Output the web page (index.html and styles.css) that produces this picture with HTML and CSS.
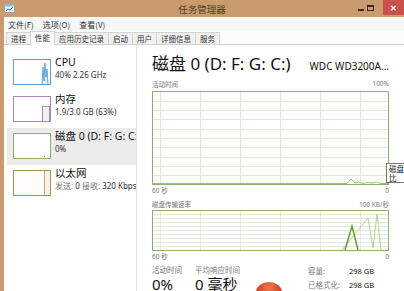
FILE: index.html
```html
<!DOCTYPE html>
<html lang="zh-CN">
<head>
    <meta charset="UTF-8">
    <meta name="viewport" content="width=device-width, initial-scale=1.0">
    <title>任务管理器</title>
    <link rel="stylesheet" href="styles.css">
</head>
<body>
    <div class="window">
        <div class="titlebar">
            <div class="app-icon">
                <svg width="11" height="9" viewBox="0 0 11 9">
                    <rect x="0.5" y="0.5" width="10" height="8" fill="#e9f1f7" stroke="#8fa7bb"/>
                    <rect x="0.5" y="0.5" width="10" height="2" fill="#9cc0dc"/>
                    <polyline points="2,7 4,5 6,6 9,3" fill="none" stroke="#3f86c4" stroke-width="1"/>
                </svg>
            </div>
            <div class="title">任务管理器</div>
            <div class="controls">
                <span class="ctl-min"></span>
                <span class="ctl-max"></span>
                <span class="ctl-close">✕</span>
            </div>
        </div>

        <div class="frame">
            <div class="menubar">
                <span>文件(F)</span>
                <span>选项(O)</span>
                <span>查看(V)</span>
            </div>
            <div class="tabs">
                <div class="tab">进程</div>
                <div class="tab active">性能</div>
                <div class="tab">应用历史记录</div>
                <div class="tab">启动</div>
                <div class="tab">用户</div>
                <div class="tab">详细信息</div>
                <div class="tab">服务</div>
            </div>

            <div class="main">
                <div class="sidebar">
                    <div class="item">
                        <svg class="thumb" width="38" height="26" viewBox="0 0 38 26">
                            <rect x="0.5" y="0.5" width="37" height="25" fill="#fff" stroke="#5b9fd0"/>
                            <polyline points="29,25 30,8 31,22 32,4 33,18 34,10 35,25" fill="#e3eff8" stroke="#4a93c8" stroke-width="0.8"/>
                        </svg>
                        <div class="info">
                            <div class="name">CPU</div>
                            <div class="sub">40% 2.26 GHz</div>
                        </div>
                    </div>
                    <div class="item">
                        <svg class="thumb" width="38" height="26" viewBox="0 0 38 26">
                            <rect x="0.5" y="0.5" width="37" height="25" fill="#fff" stroke="#a688ba"/>
                            <rect x="29.5" y="10.5" width="7" height="15" fill="#f4eff7" stroke="#a688ba"/>
                        </svg>
                        <div class="info">
                            <div class="name">内存</div>
                            <div class="sub">1.9/3.0 GB (63%)</div>
                        </div>
                    </div>
                    <div class="item selected">
                        <svg class="thumb" width="38" height="26" viewBox="0 0 38 26">
                            <rect x="0.5" y="0.5" width="37" height="25" fill="#fff" stroke="#8cb06a"/>
                            <rect x="31" y="23" width="1" height="1" fill="#6f9a48"/>
                        </svg>
                        <div class="info">
                            <div class="name">磁盘 0 (D: F: G: C:)</div>
                            <div class="sub">0%</div>
                        </div>
                    </div>
                    <div class="item">
                        <svg class="thumb" width="38" height="26" viewBox="0 0 38 26">
                            <rect x="0.5" y="0.5" width="37" height="25" fill="#fffdf9" stroke="#a88c5e"/>
                            <line x1="31.5" y1="1" x2="31.5" y2="25" stroke="#c4aa80"/>
                            <rect x="32" y="1" width="5" height="24" fill="#f7f1e6"/>
                        </svg>
                        <div class="info">
                            <div class="name">以太网</div>
                            <div class="sub"><span class="muted">发送:</span> 0 <span class="muted">接收:</span> 320 Kbps</div>
                        </div>
                    </div>
                </div>

                <div class="detail">
                    <div class="header">
                        <div class="disk-title">磁盘 0 (D: F: G: C:)</div>
                        <div class="model">WDC WD3200A...</div>
                    </div>

                    <div class="axis top">
                        <span>活动时间</span>
                        <span>100%</span>
                    </div>
                    <svg class="chart" width="237" height="94" viewBox="0 0 237 94">
                        <rect x="0.5" y="0.5" width="236" height="93" fill="#fff" stroke="#8fb070"/>
                        <g stroke="#dfe9d5" stroke-width="1">
                            <line x1="8.5" y1="1" x2="8.5" y2="93"/>
                            <line x1="48.5" y1="1" x2="48.5" y2="93"/>
                            <line x1="88.5" y1="1" x2="88.5" y2="93"/>
                            <line x1="128.5" y1="1" x2="128.5" y2="93"/>
                            <line x1="168.5" y1="1" x2="168.5" y2="93"/>
                            <line x1="208.5" y1="1" x2="208.5" y2="93"/>
                            <line x1="1" y1="10.5" x2="236" y2="10.5"/>
                            <line x1="1" y1="19.5" x2="236" y2="19.5"/>
                            <line x1="1" y1="28.5" x2="236" y2="28.5"/>
                            <line x1="1" y1="38.5" x2="236" y2="38.5"/>
                            <line x1="1" y1="47.5" x2="236" y2="47.5"/>
                            <line x1="1" y1="56.5" x2="236" y2="56.5"/>
                            <line x1="1" y1="66.5" x2="236" y2="66.5"/>
                            <line x1="1" y1="75.5" x2="236" y2="75.5"/>
                            <line x1="1" y1="84.5" x2="236" y2="84.5"/>
                        </g>
                        <polyline points="1,92.5 195,92.5 199,88 203,92 207,91 211,92.5 216,91.5 220,92 225,91 229,92.5 236,92.5" fill="none" stroke="#9cc07a" stroke-width="1"/>
                    </svg>
                    <div class="axis">
                        <span>60 秒</span>
                        <span>0</span>
                    </div>

                    <div class="axis top second">
                        <span>磁盘传输速率</span>
                        <span>100 KB/秒</span>
                    </div>
                    <svg class="chart" width="237" height="41" viewBox="0 0 237 41">
                        <rect x="0.5" y="0.5" width="236" height="40" fill="#fff" stroke="#8fb070"/>
                        <g stroke="#dfe9d5" stroke-width="1">
                            <line x1="8.5" y1="1" x2="8.5" y2="40"/>
                            <line x1="48.5" y1="1" x2="48.5" y2="40"/>
                            <line x1="88.5" y1="1" x2="88.5" y2="40"/>
                            <line x1="128.5" y1="1" x2="128.5" y2="40"/>
                            <line x1="168.5" y1="1" x2="168.5" y2="40"/>
                            <line x1="208.5" y1="1" x2="208.5" y2="40"/>
                            <line x1="1" y1="4.5" x2="236" y2="4.5"/>
                            <line x1="1" y1="8.5" x2="236" y2="8.5"/>
                            <line x1="1" y1="12.5" x2="236" y2="12.5"/>
                            <line x1="1" y1="16.5" x2="236" y2="16.5"/>
                            <line x1="1" y1="20.5" x2="236" y2="20.5"/>
                            <line x1="1" y1="24.5" x2="236" y2="24.5"/>
                            <line x1="1" y1="28.5" x2="236" y2="28.5"/>
                            <line x1="1" y1="32.5" x2="236" y2="32.5"/>
                            <line x1="1" y1="36.5" x2="236" y2="36.5"/>
                        </g>
                        <polyline points="190,40 216,8 221,38 225,4 229,40" fill="none" stroke="#b5d48f" stroke-width="1"/>
                        <polyline points="193,40 200,16 206,40" fill="none" stroke="#5f9e34" stroke-width="1.5"/>
                    </svg>
                    <div class="axis">
                        <span>60 秒</span>
                        <span>0</span>
                    </div>

                    <div class="stats">
                        <div class="stat">
                            <div class="stat-label">活动时间</div>
                            <div class="stat-value">0%</div>
                        </div>
                        <div class="stat">
                            <div class="stat-label">平均响应时间</div>
                            <div class="stat-value">0 毫秒</div>
                        </div>
                        <div class="props">
                            <span class="prop-key">容量:</span><span class="prop-val">298 GB</span>
                            <span class="prop-key">已格式化:</span><span class="prop-val">298 GB</span>
                        </div>
                    </div>

                    <div class="tooltip">磁盘<br>比</div>
                    <div class="blob"></div>
                </div>
            </div>
        </div>
    </div>
</body>
</html>
```

FILE: styles.css
```css
* {
    box-sizing: border-box;
}
body {
    margin: 0;
    width: 404px;
    height: 291px;
    overflow: hidden;
    background-color: #fff;
    color: #1e1e1e;
    font-family: "Noto Sans", "Noto Sans CJK SC", sans-serif;
}
.window {
    display: flex;
    flex-direction: column;
    height: 291px;
}
.titlebar {
    height: 17px;
    flex-shrink: 0;
    display: grid;
    grid-template-columns: 1fr auto 1fr;
    align-items: center;
    background-color: #c99b6f;
}
.app-icon {
    display: flex;
    padding-left: 4px;
}
.title {
    font-family: "Noto Sans CJK SC", sans-serif;
    font-size: 9.5px;
    color: #4b3b2b;
}
.controls {
    justify-self: end;
    align-self: start;
    display: flex;
    align-items: flex-start;
}
.ctl-min {
    width: 6px;
    height: 2px;
    margin-top: 9px;
    background-color: #2f2a24;
}
.ctl-max {
    width: 7px;
    height: 6px;
    margin-top: 5px;
    margin-left: 3px;
    border: 1px solid #2f2a24;
    border-top-width: 2px;
}
.ctl-close {
    width: 21px;
    height: 15px;
    margin-left: 9px;
    display: flex;
    justify-content: center;
    align-items: center;
    background-color: #c9514d;
    color: #fff;
    font-size: 8px;
    font-weight: bold;
}
.frame {
    flex: 1;
    min-height: 0;
    display: flex;
    flex-direction: column;
    border-left: 4px solid #c99b6f;
}
.menubar {
    height: 14px;
    flex-shrink: 0;
    display: flex;
    align-items: center;
    gap: 9px;
    padding-left: 4px;
    background-color: #f7f7f8;
    font-family: "Noto Sans CJK SC", sans-serif;
    font-size: 8px;
    color: #333;
}
.tabs {
    height: 14px;
    flex-shrink: 0;
    display: flex;
    align-items: flex-end;
    padding-left: 2px;
    border-bottom: 1px solid #cfcfcf;
    background-color: #fcfcfc;
}
.tab {
    height: 12px;
    padding: 0 4px;
    margin-right: -1px;
    border: 1px solid #d4d4d4;
    border-bottom: none;
    background-color: #f0f0f0;
    font-family: "Noto Sans CJK SC", sans-serif;
    font-size: 7.5px;
    line-height: 11px;
    color: #333;
}
.tab.active {
    position: relative;
    height: 14px;
    margin-bottom: -1px;
    background-color: #fff;
    line-height: 12px;
}
.main {
    flex: 1;
    min-height: 0;
    display: flex;
}
.sidebar {
    width: 133px;
    flex-shrink: 0;
    padding-top: 9px;
    border-right: 1px solid #e4e4e4;
}
.item {
    height: 37px;
    display: flex;
    align-items: flex-start;
    gap: 4px;
    padding: 5px 0 0 9px;
    overflow: hidden;
}
.item.selected {
    margin-left: 3px;
    padding-left: 6px;
    background-color: #ececec;
}
.thumb {
    flex-shrink: 0;
}
.info {
    margin-top: -3px;
    white-space: nowrap;
}
.name {
    font-size: 10.5px;
    line-height: 13px;
    color: #111;
}
.sub {
    margin-top: 1px;
    font-size: 8px;
    line-height: 9px;
    color: #333;
}
.muted {
    color: #777;
}
.detail {
    flex: 1;
    position: relative;
    padding: 7px 15px 0 15px;
}
.header {
    height: 26px;
    display: flex;
    justify-content: space-between;
    align-items: baseline;
    white-space: nowrap;
}
.disk-title {
    font-size: 17px;
    line-height: 24px;
    color: #111;
}
.model {
    font-size: 10px;
    color: #111;
}
.axis {
    height: 10px;
    display: flex;
    justify-content: space-between;
    align-items: center;
    font-size: 6.5px;
    color: #777;
}
.axis.top {
    height: 11px;
    margin-bottom: 2px;
}
.axis.second {
    height: 11px;
    margin-top: 3px;
    margin-bottom: 1px;
}
.chart {
    display: block;
}
.stats {
    display: grid;
    grid-template-columns: 43px 113px auto;
    padding-top: 4px;
}
.stat-label {
    font-size: 7.5px;
    line-height: 11px;
    color: #777;
}
.stat-value {
    font-size: 15px;
    line-height: 17px;
    color: #111;
}
.props {
    display: grid;
    grid-template-columns: 41px auto;
    padding-top: 1px;
    font-size: 7.5px;
    line-height: 11px;
}
.prop-key {
    color: #777;
}
.prop-val {
    color: #111;
}
.tooltip {
    position: absolute;
    left: 249px;
    top: 118px;
    width: 26px;
    height: 20px;
    padding: 1px 2px;
    border: 1px solid #777;
    background-color: #fff;
    font-size: 7.5px;
    line-height: 8.5px;
    color: #222;
}
.blob {
    position: absolute;
    left: 119px;
    top: 237px;
    width: 26px;
    height: 20px;
    border-radius: 50%;
    background: radial-gradient(ellipse at 50% 30%, #ef7a4c, #cf3d23 70%);
}
```
